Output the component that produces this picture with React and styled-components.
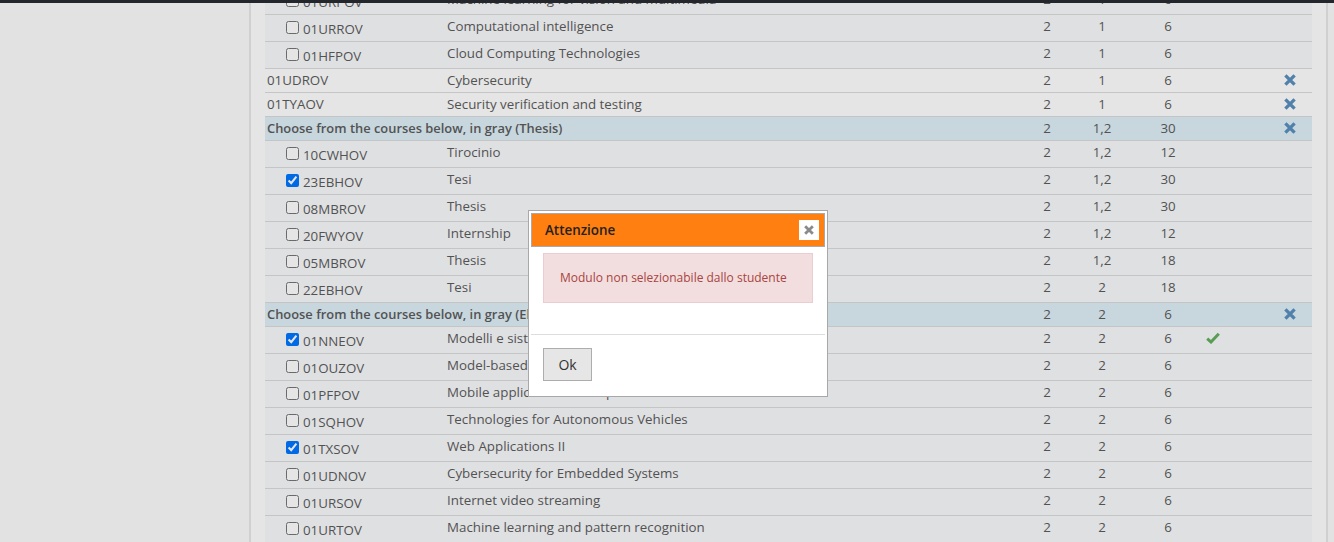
import React from 'react'
import styled, { createGlobalStyle } from 'styled-components'

const GlobalStyle = createGlobalStyle`
  html, body {
    margin: 0;
    padding: 0;
    height: 100%;
    overflow: hidden;
    background: #fcfcfc;
    font-family: "Open Sans", "Liberation Sans", sans-serif;
  }
`

const courses = [
  { code: '01URPOV', name: 'Machine learning for vision and multimedia', a: '2', b: '1', c: '6' },
  { code: '01URROV', name: 'Computational intelligence', a: '2', b: '1', c: '6' },
  { code: '01HFPOV', name: 'Cloud Computing Technologies', a: '2', b: '1', c: '6' },
  { kind: 'plain', code: '01UDROV', name: 'Cybersecurity', a: '2', b: '1', c: '6', remove: true },
  { kind: 'plain', code: '01TYAOV', name: 'Security verification and testing', a: '2', b: '1', c: '6', remove: true },
  { kind: 'group', name: 'Choose from the courses below, in gray (Thesis)', a: '2', b: '1,2', c: '30', remove: true },
  { code: '10CWHOV', name: 'Tirocinio', a: '2', b: '1,2', c: '12' },
  { code: '23EBHOV', name: 'Tesi', a: '2', b: '1,2', c: '30', checked: true },
  { code: '08MBROV', name: 'Thesis', a: '2', b: '1,2', c: '30' },
  { code: '20FWYOV', name: 'Internship', a: '2', b: '1,2', c: '12' },
  { code: '05MBROV', name: 'Thesis', a: '2', b: '1,2', c: '18' },
  { code: '22EBHOV', name: 'Tesi', a: '2', b: '2', c: '18' },
  { kind: 'group', name: 'Choose from the courses below, in gray (Elective)', a: '2', b: '2', c: '6', remove: true },
  { code: '01NNEOV', name: 'Modelli e sistemi', a: '2', b: '2', c: '6', checked: true, ok: true },
  { code: '01OUZOV', name: 'Model-based software design', a: '2', b: '2', c: '6' },
  { code: '01PFPOV', name: 'Mobile application development', a: '2', b: '2', c: '6' },
  { code: '01SQHOV', name: 'Technologies for Autonomous Vehicles', a: '2', b: '2', c: '6' },
  { code: '01TXSOV', name: 'Web Applications II', a: '2', b: '2', c: '6', checked: true },
  { code: '01UDNOV', name: 'Cybersecurity for Embedded Systems', a: '2', b: '2', c: '6' },
  { code: '01URSOV', name: 'Internet video streaming', a: '2', b: '2', c: '6' },
  { code: '01URTOV', name: 'Machine learning and pattern recognition', a: '2', b: '2', c: '6' },
]

const RemoveIcon = ({ size = 12, color = '#5a90bf' }) => (
  <svg width={size} height={size} viewBox="0 0 12 12" aria-hidden="true">
    <path d="M1.4 1.4 10.6 10.6M10.6 1.4 1.4 10.6" stroke={color} strokeWidth="3.3" fill="none" />
  </svg>
)

const OkIcon = () => (
  <svg width="14" height="12" viewBox="0 0 14 12" aria-hidden="true">
    <path d="M1.2 6.6 5 10 12.8 1.8" stroke="#62b05c" strokeWidth="3" fill="none" />
  </svg>
)

const Row = ({ row }) => {
  if (row.kind === 'group') {
    return (
      <GroupRow>
        <GroupTitle colSpan={2}>{row.name}</GroupTitle>
        <Num>{row.a}</Num>
        <Num>{row.b}</Num>
        <Num>{row.c}</Num>
        <Status />
        <Action><RemoveIcon /></Action>
      </GroupRow>
    )
  }
  if (row.kind === 'plain') {
    return (
      <PlainRow>
        <PlainCode>{row.code}</PlainCode>
        <Name>{row.name}</Name>
        <Num>{row.a}</Num>
        <Num>{row.b}</Num>
        <Num>{row.c}</Num>
        <Status />
        <Action>{row.remove && <RemoveIcon />}</Action>
      </PlainRow>
    )
  }
  return (
    <ChoiceRow>
      <CodeCell>
        <CodeWrap>
          <Check type="checkbox" checked={!!row.checked} readOnly />
          <span>{row.code}</span>
        </CodeWrap>
      </CodeCell>
      <ChoiceName>{row.name}</ChoiceName>
      <ChoiceNum>{row.a}</ChoiceNum>
      <ChoiceNum>{row.b}</ChoiceNum>
      <ChoiceNum>{row.c}</ChoiceNum>
      <ChoiceStatus>{row.ok && <OkIcon />}</ChoiceStatus>
      <Action />
    </ChoiceRow>
  )
}

const App = () => (
  <>
    <GlobalStyle />
    <Page>
      <TopBar />
      <Body>
        <Side />
        <Panel>
          <Table>
            <colgroup>
              <col style={{ width: 180 }} />
              <col />
              <col style={{ width: 54 }} />
              <col style={{ width: 56 }} />
              <col style={{ width: 76 }} />
              <col style={{ width: 62 }} />
              <col style={{ width: 44 }} />
            </colgroup>
            <tbody>
              {courses.map((row, i) => <Row key={i} row={row} />)}
            </tbody>
          </Table>
        </Panel>
      </Body>
      <Overlay />
      <Dialog>
        <DialogHead>
          <DialogTitle>Attenzione</DialogTitle>
          <CloseButton><RemoveIcon size={10} color="#8a8a8a" /></CloseButton>
        </DialogHead>
        <DialogBody>
          <Alert>Modulo non selezionabile dallo studente</Alert>
        </DialogBody>
        <DialogFoot>
          <OkButton>Ok</OkButton>
        </DialogFoot>
      </Dialog>
    </Page>
  </>
)

const Page = styled.div`
  position: relative;
  width: 1334px;
  height: 542px;
  overflow: hidden;
  display: flex;
  flex-direction: column;
`

const TopBar = styled.div`
  flex: 0 0 3px;
  background: #23272c;
  position: relative;
  z-index: 2;
`

const Body = styled.div`
  flex: 1;
  display: flex;
  min-height: 0;
`

const Side = styled.div`
  flex: 0 0 249px;
`

const Panel = styled.div`
  flex: 0 0 1079px;
  box-sizing: border-box;
  background: #fff;
  border-left: 2px solid #e8e8e8;
  border-right: 2px solid #e8e8e8;
  padding: 0 15px 0 14px;
  overflow: hidden;
`

const Table = styled.table`
  width: 1047px;
  margin-top: -16px;
  table-layout: fixed;
  border-collapse: collapse;
  font-size: 13.33px;
  color: #5c5c5c;

  td {
    padding: 0 2px;
    border-top: 1px solid #dcdcdc;
    border-bottom: 1px solid #dcdcdc;
  }
`

const PlainRow = styled.tr`
  height: 24px;
  background: #fff;

  td { padding-bottom: 2px; }
`

const ChoiceRow = styled.tr`
  height: 27px;
  background: #f9fafc;
`

const GroupRow = styled.tr`
  height: 24px;
  background: #dfeff8;

  td { padding-bottom: 2px; }
`

const GroupTitle = styled.td`
  font-size: 12.9px;
  font-weight: 600;
  white-space: nowrap;
`

const PlainCode = styled.td``

const Name = styled.td`
  white-space: nowrap;
`

const ChoiceName = styled(Name)`
  vertical-align: top;
  line-height: 23px;
`

const CodeCell = styled.td`
  vertical-align: top;
`

const CodeWrap = styled.div`
  display: flex;
  align-items: center;
  padding: 4px 0 0 19px;
  height: 24px;
  box-sizing: border-box;
  line-height: 20px;
`

const Check = styled.input`
  margin: -4px 4px 0 0;
  width: 13px;
  height: 13px;
`

const Num = styled.td`
  text-align: center;
`

const ChoiceNum = styled(Num)`
  vertical-align: top;
  line-height: 23px;
`

const Status = styled.td``

const ChoiceStatus = styled.td`
  vertical-align: top;
  line-height: 0;
  && { padding: 5px 0 0 0; }
`

const Action = styled.td`
  text-align: center;
  line-height: 0;
`

const Overlay = styled.div`
  position: absolute;
  inset: 0;
  background: rgba(0, 0, 0, 0.1);
`

const Dialog = styled.div`
  position: absolute;
  left: 528px;
  top: 210px;
  width: 300px;
  height: 187px;
  box-sizing: border-box;
  padding: 2px;
  background: #fff;
  border: 1px solid #a8a8a8;
  display: flex;
  flex-direction: column;
`

const DialogHead = styled.div`
  flex: 0 0 34px;
  box-sizing: border-box;
  display: flex;
  align-items: center;
  justify-content: space-between;
  padding: 0 5px 0 13px;
  background: #ff7f11;
  border: 1px solid #aaa;
`

const DialogTitle = styled.span`
  font-size: 13.4px;
  font-weight: 600;
  color: #222;
`

const CloseButton = styled.span`
  width: 20px;
  height: 20px;
  background: #fff;
  display: flex;
  align-items: center;
  justify-content: center;
`

const DialogBody = styled.div`
  flex: 0 0 88px;
  box-sizing: border-box;
  padding: 6px 12px 0;
  border-bottom: 1px solid #ddd;
`

const Alert = styled.div`
  height: 50px;
  box-sizing: border-box;
  display: flex;
  align-items: center;
  padding: 0 0 2px 16px;
  font-size: 12px;
  color: #a94442;
  background: #f2dede;
  border: 1px solid #ebccd1;
`

const DialogFoot = styled.div`
  padding: 13px 12px 0;
`

const OkButton = styled.div`
  width: 49px;
  height: 33px;
  box-sizing: border-box;
  display: flex;
  align-items: center;
  justify-content: center;
  font-size: 14px;
  color: #333;
  background: #e6e6e6;
  border: 1px solid #adadad;
`

export default App
